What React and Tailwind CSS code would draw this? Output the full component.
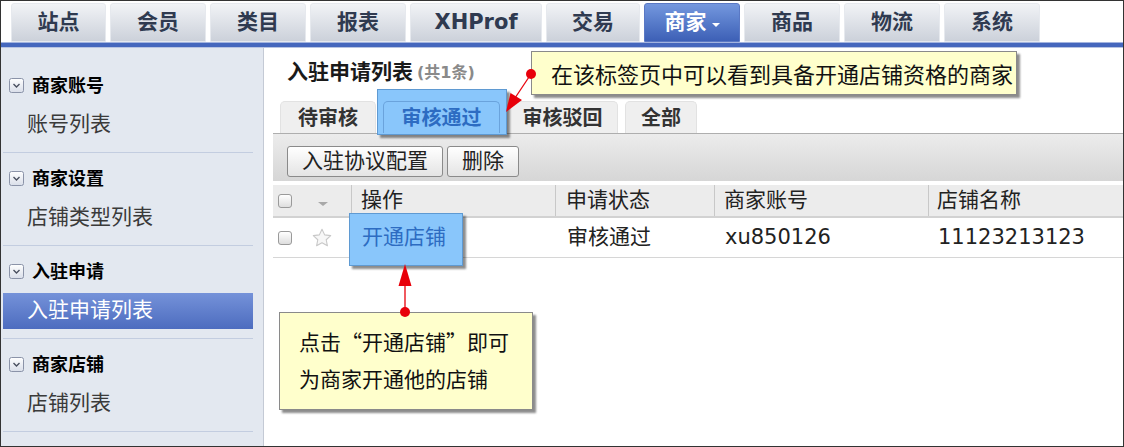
import React from 'react';

const FONT = "font-['DejaVu_Sans','Noto_Sans_CJK_SC',sans-serif]";
const CJK = "font-['Noto_Sans_CJK_SC','DejaVu_Sans',sans-serif]";

const navTabs = [
  { label: '站点', width: 'w-[95px]' },
  { label: '会员', width: 'w-[96px]' },
  { label: '类目', width: 'w-[96px]' },
  { label: '报表', width: 'w-[96px]' },
  { label: 'XHProf', width: 'w-[132px]' },
  { label: '交易', width: 'w-[94px]' },
  { label: '商家', width: 'w-[96px]', active: true },
  { label: '商品', width: 'w-[96px]' },
  { label: '物流', width: 'w-[96px]' },
  { label: '系统', width: 'w-[96px]' },
];

const groups = [
  { title: '商家账号', item: '账号列表' },
  { title: '商家设置', item: '店铺类型列表' },
  { title: '入驻申请', item: '入驻申请列表', active: true },
  { title: '商家店铺', item: '店铺列表' },
];

const subTabs = [
  { label: '待审核', width: 'w-[96px]' },
  { label: '审核通过', width: 'w-[117px]', active: true },
  { label: '审核驳回', width: 'w-[111px]' },
  { label: '全部', width: 'w-[72px]' },
];

const CollapseIcon = () => (
  <svg width="15" height="15" viewBox="0 0 15 15">
    <defs>
      <linearGradient id="cbg" x1="0" y1="0" x2="0" y2="1">
        <stop offset="0" stopColor="#ffffff" />
        <stop offset="1" stopColor="#d9dee9" />
      </linearGradient>
    </defs>
    <rect x="0.5" y="0.5" width="14" height="14" rx="2" fill="url(#cbg)" stroke="#8b93a8" />
    <path d="M4.5 6 L7.5 9 L10.5 6" fill="none" stroke="#4a5060" strokeWidth="1.4" />
  </svg>
);

const Checkbox = () => (
  <span className="block w-[14px] h-[14px] rounded-[3px] border border-[#9a9a9a] bg-gradient-to-b from-white to-[#dedede]" />
);

const Star = () => (
  <svg width="22" height="22" viewBox="0 0 24 24">
    <path
      d="M12 2.5 L14.9 8.6 L21.5 9.4 L16.6 13.9 L17.9 20.5 L12 17.2 L6.1 20.5 L7.4 13.9 L2.5 9.4 L9.1 8.6 Z"
      fill="#f7f7f7"
      stroke="#c8c8c8"
      strokeWidth="1.2"
      strokeLinejoin="round"
    />
  </svg>
);

export default function App() {
  return (
    <div className={`relative w-[1124px] h-[447px] border border-[#333] bg-white flex flex-col overflow-hidden ${FONT}`}>
      {/* top nav */}
      <div className="h-[41px] pt-[2px] pl-[10px] flex items-end gap-[4px] bg-white">
        {navTabs.map((tab) => (
          <div
            key={tab.label}
            className={`${tab.width} h-[39px] flex items-center justify-center gap-[5px] rounded-t-[3px] border text-[21px] font-bold ${
              tab.active
                ? 'bg-gradient-to-b from-[#7497de] to-[#3d60b6] border-[#5a78c4] text-white'
                : 'bg-gradient-to-b from-[#f1f3f6] to-[#ccd1da] border-[#e6e9ee] text-[#2f3a50]'
            }`}
          >
            {tab.label}
            {tab.active && (
              <span className="w-0 h-0 border-x-[4px] border-x-transparent border-t-[4px] border-t-white mt-[4px]" />
            )}
          </div>
        ))}
      </div>
      <div className="h-[6px] bg-[#4567bd] border-t border-[#a3b4df] border-b border-b-[#b8c4e2]" />

      {/* body */}
      <div className="flex flex-1">
        {/* sidebar */}
        <div className="w-[263px] bg-[#e3e8f0] border-r border-[#c4cad5] pt-[12px] pl-[2px] pr-[10px]">
          {groups.map((g) => (
            <div key={g.title} className="pt-[12px] pb-[9px] border-b border-[#c3cde0]">
              <div className="h-[26px] flex items-center pl-[6px] gap-[8px] text-[18px] font-bold text-black">
                <CollapseIcon />
                {g.title}
              </div>
              <div
                className={`mt-[9px] h-[36px] flex items-center pl-[24px] text-[21px] ${
                  g.active
                    ? 'bg-gradient-to-b from-[#7592d9] to-[#4d6cbf] text-white'
                    : 'text-[#3a3a3a]'
                }`}
              >
                {g.item}
              </div>
            </div>
          ))}
        </div>

        {/* main */}
        <div className="flex-1 pl-[9px] bg-white">
          <div className="mt-[12px] h-[26px] flex items-center pl-[14px] gap-[4px]">
            <span className="text-[21px] font-bold text-[#1a1a1a]">入驻申请列表</span>
            <span className="text-[16px] font-bold text-[#8a8a8a]">(共1条)</span>
          </div>

          <div className="mt-[14px] h-[33px] flex items-end pl-[7px] gap-[7px]">
            {subTabs.map((t) => (
              <div
                key={t.label}
                className={`${t.width} h-[32px] flex items-center justify-center rounded-t-[5px] border border-b-0 text-[20px] font-bold ${
                  t.active
                    ? 'relative z-10 border-[#6aa3dc] text-[#2d6cc2]'
                    : 'bg-[#efefef] border-[#e2e2e2] text-[#333]'
                }`}
              >
                {t.label}
              </div>
            ))}
          </div>

          {/* toolbar */}
          <div className="h-[48px] pt-[12px] pl-[14px] flex items-start gap-[4px] border-t border-[#aeaeae] bg-gradient-to-b from-[#ececec] to-[#d6d6d6]">
            <button className="w-[156px] h-[31px] rounded-[3px] border border-[#8a8a8a] bg-gradient-to-b from-white to-[#e4e4e4] text-[21px] text-[#222] flex items-center justify-center">
              入驻协议配置
            </button>
            <button className="w-[72px] h-[31px] rounded-[3px] border border-[#8a8a8a] bg-gradient-to-b from-white to-[#e4e4e4] text-[21px] text-[#222] flex items-center justify-center">
              删除
            </button>
          </div>

          {/* table */}
          <div className="mt-[4px]">
            <div className="h-[33px] flex bg-[#ececec] border-b-2 border-[#d2d2d2] text-[21px] text-[#222]">
              <div className="w-[79px] flex items-center pl-[5px] gap-[26px] border-r border-[#c8c8c8]">
                <Checkbox />
                <span className="w-0 h-0 border-x-[5px] border-x-transparent border-t-[4px] border-t-[#a8a8a8] mt-[6px]" />
              </div>
              <div className="w-[204px] flex items-center pl-[9px] border-r border-[#c8c8c8]">操作</div>
              <div className="w-[159px] flex items-center pl-[10px] border-r border-[#c8c8c8]">申请状态</div>
              <div className="w-[214px] flex items-center pl-[9px] border-r border-[#c8c8c8]">商家账号</div>
              <div className="flex-1 flex items-center pl-[8px]">店铺名称</div>
            </div>
            <div className="h-[40px] flex border-b border-[#d6d6d6] text-[21px] text-[#222]">
              <div className="w-[79px] flex items-center pl-[5px] gap-[19px]">
                <Checkbox />
                <Star />
              </div>
              <div className="w-[204px] flex items-center pl-[10px]">
                <span className="relative z-10 text-[#2d6cc2]">开通店铺</span>
              </div>
              <div className="w-[159px] flex items-center pl-[11px]">审核通过</div>
              <div className="w-[214px] flex items-center pl-[10px]">xu850126</div>
              <div className="flex-1 flex items-center pl-[9px]">11123213123</div>
            </div>
          </div>
        </div>
      </div>

      {/* annotation highlights */}
      <div className="absolute z-0 left-[376px] top-[88px] w-[130px] h-[46px] bg-[#89c6fb] border border-[#5f9ad2] shadow-[3px_3px_2px_rgba(0,0,0,0.45)]" />
      <div className="absolute z-0 left-[348px] top-[212px] w-[114px] h-[53px] bg-[#89c6fb] border border-[#5f9ad2] shadow-[3px_3px_2px_rgba(0,0,0,0.45)]" />

      {/* callouts */}
      <div className={`absolute z-20 left-[530px] top-[50px] w-[486px] h-[44px] flex items-center pl-[19px] bg-[#ffffcc] border border-[#8a8a8a] shadow-[3px_3px_2px_rgba(0,0,0,0.45)] text-[22px] text-[#111] ${CJK}`}>
        在该标签页中可以看到具备开通店铺资格的商家
      </div>
      <div className={`absolute z-20 left-[278px] top-[311px] w-[254px] h-[98px] pt-[10px] pl-[19px] bg-[#ffffcc] border border-[#8a8a8a] shadow-[3px_3px_2px_rgba(0,0,0,0.45)] text-[21px] leading-[37px] text-[#111] ${CJK}`}>
        <div>点击“开通店铺”即可</div>
        <div>为商家开通他的店铺</div>
      </div>

      {/* red arrows */}
      <svg className="absolute z-30 left-[-1px] top-[-1px] pointer-events-none" width="1124" height="447" viewBox="0 0 1124 447">
        <line x1="531" y1="74" x2="515" y2="98" stroke="#e8000a" strokeWidth="1.3" />
        <polygon points="506,112 510.5,93 522,100" fill="#e8000a" />
        <circle cx="531" cy="74" r="5" fill="#e8000a" />
        <line x1="405" y1="311" x2="405" y2="284" stroke="#e8000a" strokeWidth="1.3" />
        <polygon points="405,264 398.5,286 411.5,286" fill="#e8000a" />
        <circle cx="405" cy="312" r="5" fill="#e8000a" />
      </svg>
    </div>
  );
}
